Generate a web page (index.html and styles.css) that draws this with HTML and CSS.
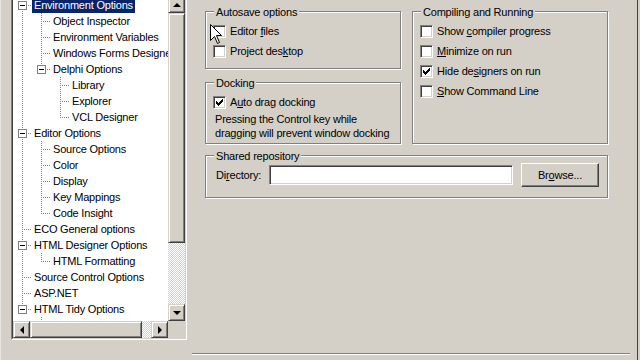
FILE: index.html
```html
<!DOCTYPE html>
<html lang="en">
<head>
  <meta charset="UTF-8" />
  <title>Environment Options</title>
  <link rel="stylesheet" href="styles.css">
</head>
<body>
  <div class="dialog">

    <div class="tree-frame">
      <div class="tree-inner">
        <div class="tree-view">
          <div class="node"><span class="c t"><i class="exp"></i></span><span class="label sel">Environment Options</span></div>
          <div class="node"><span class="c v"></span><span class="c t"></span><span class="label">Object Inspector</span></div>
          <div class="node"><span class="c v"></span><span class="c t"></span><span class="label">Environment Variables</span></div>
          <div class="node"><span class="c v"></span><span class="c t"></span><span class="label">Windows Forms Designer</span></div>
          <div class="node"><span class="c v"></span><span class="c l"><i class="exp"></i></span><span class="label">Delphi Options</span></div>
          <div class="node"><span class="c v"></span><span class="c"></span><span class="c t"></span><span class="label">Library</span></div>
          <div class="node"><span class="c v"></span><span class="c"></span><span class="c t"></span><span class="label">Explorer</span></div>
          <div class="node"><span class="c v"></span><span class="c"></span><span class="c l"></span><span class="label">VCL Designer</span></div>
          <div class="node"><span class="c t"><i class="exp"></i></span><span class="label">Editor Options</span></div>
          <div class="node"><span class="c v"></span><span class="c t"></span><span class="label">Source Options</span></div>
          <div class="node"><span class="c v"></span><span class="c t"></span><span class="label">Color</span></div>
          <div class="node"><span class="c v"></span><span class="c t"></span><span class="label">Display</span></div>
          <div class="node"><span class="c v"></span><span class="c t"></span><span class="label">Key Mappings</span></div>
          <div class="node"><span class="c v"></span><span class="c l"></span><span class="label">Code Insight</span></div>
          <div class="node"><span class="c t"></span><span class="label">ECO General options</span></div>
          <div class="node"><span class="c t"><i class="exp"></i></span><span class="label">HTML Designer Options</span></div>
          <div class="node"><span class="c v"></span><span class="c l"></span><span class="label">HTML Formatting</span></div>
          <div class="node"><span class="c t"></span><span class="label">Source Control Options</span></div>
          <div class="node"><span class="c t"></span><span class="label">ASP.NET</span></div>
          <div class="node"><span class="c l"><i class="exp"></i></span><span class="label">HTML Tidy Options</span></div>
          <div class="node"><span class="c"></span><span class="c t"></span><span class="label"></span></div>
        </div>

        <div class="vscroll">
          <div class="sbtn raised"><i class="arrow-up"></i></div>
          <div class="vthumb raised"></div>
          <div class="track"></div>
          <div class="sbtn raised"><i class="arrow-down"></i></div>
        </div>

        <div class="hscroll">
          <div class="sbtn raised"><i class="arrow-left"></i></div>
          <div class="hthumb raised"></div>
          <div class="track"></div>
          <div class="sbtn raised"><i class="arrow-right"></i></div>
        </div>

        <div class="corner"></div>
      </div>
    </div>

    <div class="options">
      <div class="groups">
        <div class="stack">
          <div class="group autosave">
            <div class="group-title">Autosave options</div>
            <div class="check-list">
              <div class="check"><span class="cb"></span><span>Editor <u>f</u>iles</span></div>
              <div class="check"><span class="cb"></span><span>Project des<u>k</u>top</span></div>
            </div>
          </div>

          <div class="group docking">
            <div class="group-title">Docking</div>
            <div class="check-list">
              <div class="check"><span class="cb"><svg width="7" height="7" viewBox="0 0 7 7"><path d="M0 2h1v1h1v1h1v-1h1v-1h1v-1h1v-1h1v3h-1v1h-1v1h-1v1h-1v1h-1v-1h-1v-1h-1z" fill="#000"/></svg></span><span>A<u>u</u>to drag docking</span></div>
            </div>
            <div class="note">Pressing the Control key while<br>dragging will prevent window docking</div>
          </div>
        </div>

        <div class="group compiling">
          <div class="group-title">Compiling and Running</div>
          <div class="check-list">
            <div class="check"><span class="cb"></span><span>Show <u>c</u>ompiler progress</span></div>
            <div class="check"><span class="cb"></span><span><u>M</u>inimize on run</span></div>
            <div class="check"><span class="cb"><svg width="7" height="7" viewBox="0 0 7 7"><path d="M0 2h1v1h1v1h1v-1h1v-1h1v-1h1v-1h1v3h-1v1h-1v1h-1v1h-1v1h-1v-1h-1v-1h-1z" fill="#000"/></svg></span><span>Hide de<u>s</u>igners on run</span></div>
            <div class="check"><span class="cb"></span><span><u>S</u>how Command Line</span></div>
          </div>
        </div>

        <div class="group shared">
          <div class="group-title">Shared repository</div>
          <div class="dir-row">
            <span class="dir-label">Di<u>r</u>ectory:</span>
            <span class="edit"></span>
            <span class="button">Br<u>o</u>wse...</span>
          </div>
        </div>
      </div>

      <div class="separator"></div>

      <svg class="cursor" width="13" height="21" viewBox="0 0 13 21">
        <path d="M0.5 0.5 L0.5 16.5 L4.5 12.5 L7.5 19.5 L9.5 18.5 L6.5 11.5 L11.5 11.5 Z" fill="#fff" stroke="#000" stroke-width="1"/>
      </svg>
    </div>

    <div class="edge"></div>
  </div>
</body>
</html>
```

FILE: styles.css
```css
* {
  margin: 0;
  padding: 0;
  box-sizing: border-box;
}

body {
  background-color: #d4d0c8;
  color: #000;
  font-family: "Liberation Sans", Arial, sans-serif;
  font-size: 11px;
  letter-spacing: -0.2px;
  width: 640px;
  height: 360px;
  overflow: hidden;
}

.dialog {
  display: flex;
  height: 360px;
  border-left: 1px solid #e8e6e0;
}

/* tree view */

.tree-frame {
  margin: -6px 0 0 10px;
  width: 176px;
  height: 346px;
  flex-shrink: 0;
  border: 1px solid;
  border-color: #808080 #fff #fff #808080;
}

.tree-inner {
  height: 100%;
  border: 1px solid;
  border-color: #404040 #d4d0c8 #d4d0c8 #404040;
  background-color: #fff;
  display: grid;
  grid-template-columns: 1fr 17px;
  grid-template-rows: 1fr 17px;
}

.tree-view {
  overflow: hidden;
  padding-top: 1px;
}

.node {
  display: flex;
  height: 16px;
  white-space: nowrap;
}

.c {
  position: relative;
  flex: none;
  width: 19px;
  height: 16px;
}

.c.v::before,
.c.t::before,
.c.l::before {
  content: "";
  position: absolute;
  left: 9px;
  top: 0;
  width: 1px;
  height: 16px;
  background: linear-gradient(#808080 50%, transparent 50%) 0 0 / 1px 2px;
}

.c.l::before {
  height: 9px;
}

.c.t::after,
.c.l::after {
  content: "";
  position: absolute;
  left: 9px;
  top: 8px;
  width: 10px;
  height: 1px;
  background: linear-gradient(90deg, #808080 50%, transparent 50%) 0 0 / 2px 1px;
}

.exp {
  position: absolute;
  left: 5px;
  top: 4px;
  width: 9px;
  height: 9px;
  border: 1px solid #808080;
  background-color: #fff;
  z-index: 1;
}

.exp::after {
  content: "";
  position: absolute;
  left: 1px;
  top: 3px;
  width: 5px;
  height: 1px;
  background-color: #000;
}

.label {
  flex: none;
  padding: 0 2px;
  line-height: 16px;
}

.label.sel {
  background-color: #0a246a;
  color: #fff;
}

/* scrollbars */

.raised {
  background-color: #d4d0c8;
  border: 1px solid;
  border-color: #d4d0c8 #404040 #404040 #d4d0c8;
  box-shadow: inset 1px 1px 0 #fff, inset -1px -1px 0 #808080;
}

.vscroll {
  display: flex;
  flex-direction: column;
}

.hscroll {
  display: flex;
}

.sbtn {
  flex: none;
  width: 17px;
  height: 17px;
  display: flex;
  align-items: center;
  justify-content: center;
}

.vthumb {
  height: 230px;
  flex: none;
}

.hthumb {
  width: 112px;
  flex: none;
}

.track {
  flex: 1;
  background: repeating-conic-gradient(#fff 0 25%, #d4d0c8 0 50%) 0 0 / 2px 2px;
}

.corner {
  background-color: #d4d0c8;
}

.arrow-up,
.arrow-down {
  border-left: 4px solid transparent;
  border-right: 4px solid transparent;
}

.arrow-up {
  border-bottom: 4px solid #000;
}

.arrow-down {
  border-top: 4px solid #000;
}

.arrow-left,
.arrow-right {
  border-top: 4px solid transparent;
  border-bottom: 4px solid transparent;
}

.arrow-left {
  border-right: 4px solid #000;
}

.arrow-right {
  border-left: 4px solid #000;
}

/* option pages */

.options {
  position: relative;
  flex: 1;
  display: flex;
  flex-direction: column;
  padding: 11px 0 0 18px;
}

.groups {
  display: grid;
  grid-template-columns: 196px 196px;
  column-gap: 11px;
  row-gap: 11px;
}

.stack {
  display: flex;
  flex-direction: column;
  gap: 13px;
}

.group {
  border: 1px solid #808080;
  box-shadow: inset 1px 1px 0 #fff, 1px 1px 0 #fff;
  padding: 0 7px 7px;
}

.group-title {
  width: fit-content;
  margin: -6px 0 0 1px;
  padding: 0 2px;
  line-height: 13px;
  background-color: #d4d0c8;
}

.docking {
  padding-bottom: 3px;
}

.shared {
  grid-column: span 2;
  padding-bottom: 10px;
}

.check-list {
  margin-top: 2px;
}

.check {
  display: flex;
  align-items: center;
  gap: 4px;
  height: 20px;
}

.cb {
  width: 13px;
  height: 13px;
  flex: none;
  border: 1px solid;
  border-color: #808080 #fff #fff #808080;
  background-color: #fff;
  box-shadow: inset 1px 1px 0 #404040, inset -1px -1px 0 #d4d0c8;
  display: flex;
  align-items: center;
  justify-content: center;
}

.cb svg {
  display: block;
  shape-rendering: crispEdges;
}

.note {
  padding-left: 2px;
  line-height: 14px;
  white-space: nowrap;
}

.dir-row {
  display: flex;
  align-items: center;
  height: 24px;
  margin-top: 0;
}

.dir-label {
  width: 56px;
  padding-left: 3px;
}

.edit {
  width: 244px;
  height: 20px;
  border: 1px solid;
  border-color: #808080 #fff #fff #808080;
  background-color: #fff;
  box-shadow: inset 1px 1px 0 #404040, inset -1px -1px 0 #d4d0c8;
}

.button {
  margin-left: 8px;
  width: 78px;
  height: 24px;
  display: flex;
  align-items: center;
  justify-content: center;
  border: 1px solid;
  border-color: #fff #404040 #404040 #fff;
  box-shadow: inset -1px -1px 0 #808080;
}

.separator {
  margin: auto 0 5px -13px;
  width: 438px;
  border-top: 1px solid #808080;
  border-bottom: 1px solid #fff;
}

.cursor {
  position: absolute;
  left: 23px;
  top: 24px;
}

.edge {
  width: 3px;
  flex-shrink: 0;
  border-left: 1px solid #404040;
}
```
